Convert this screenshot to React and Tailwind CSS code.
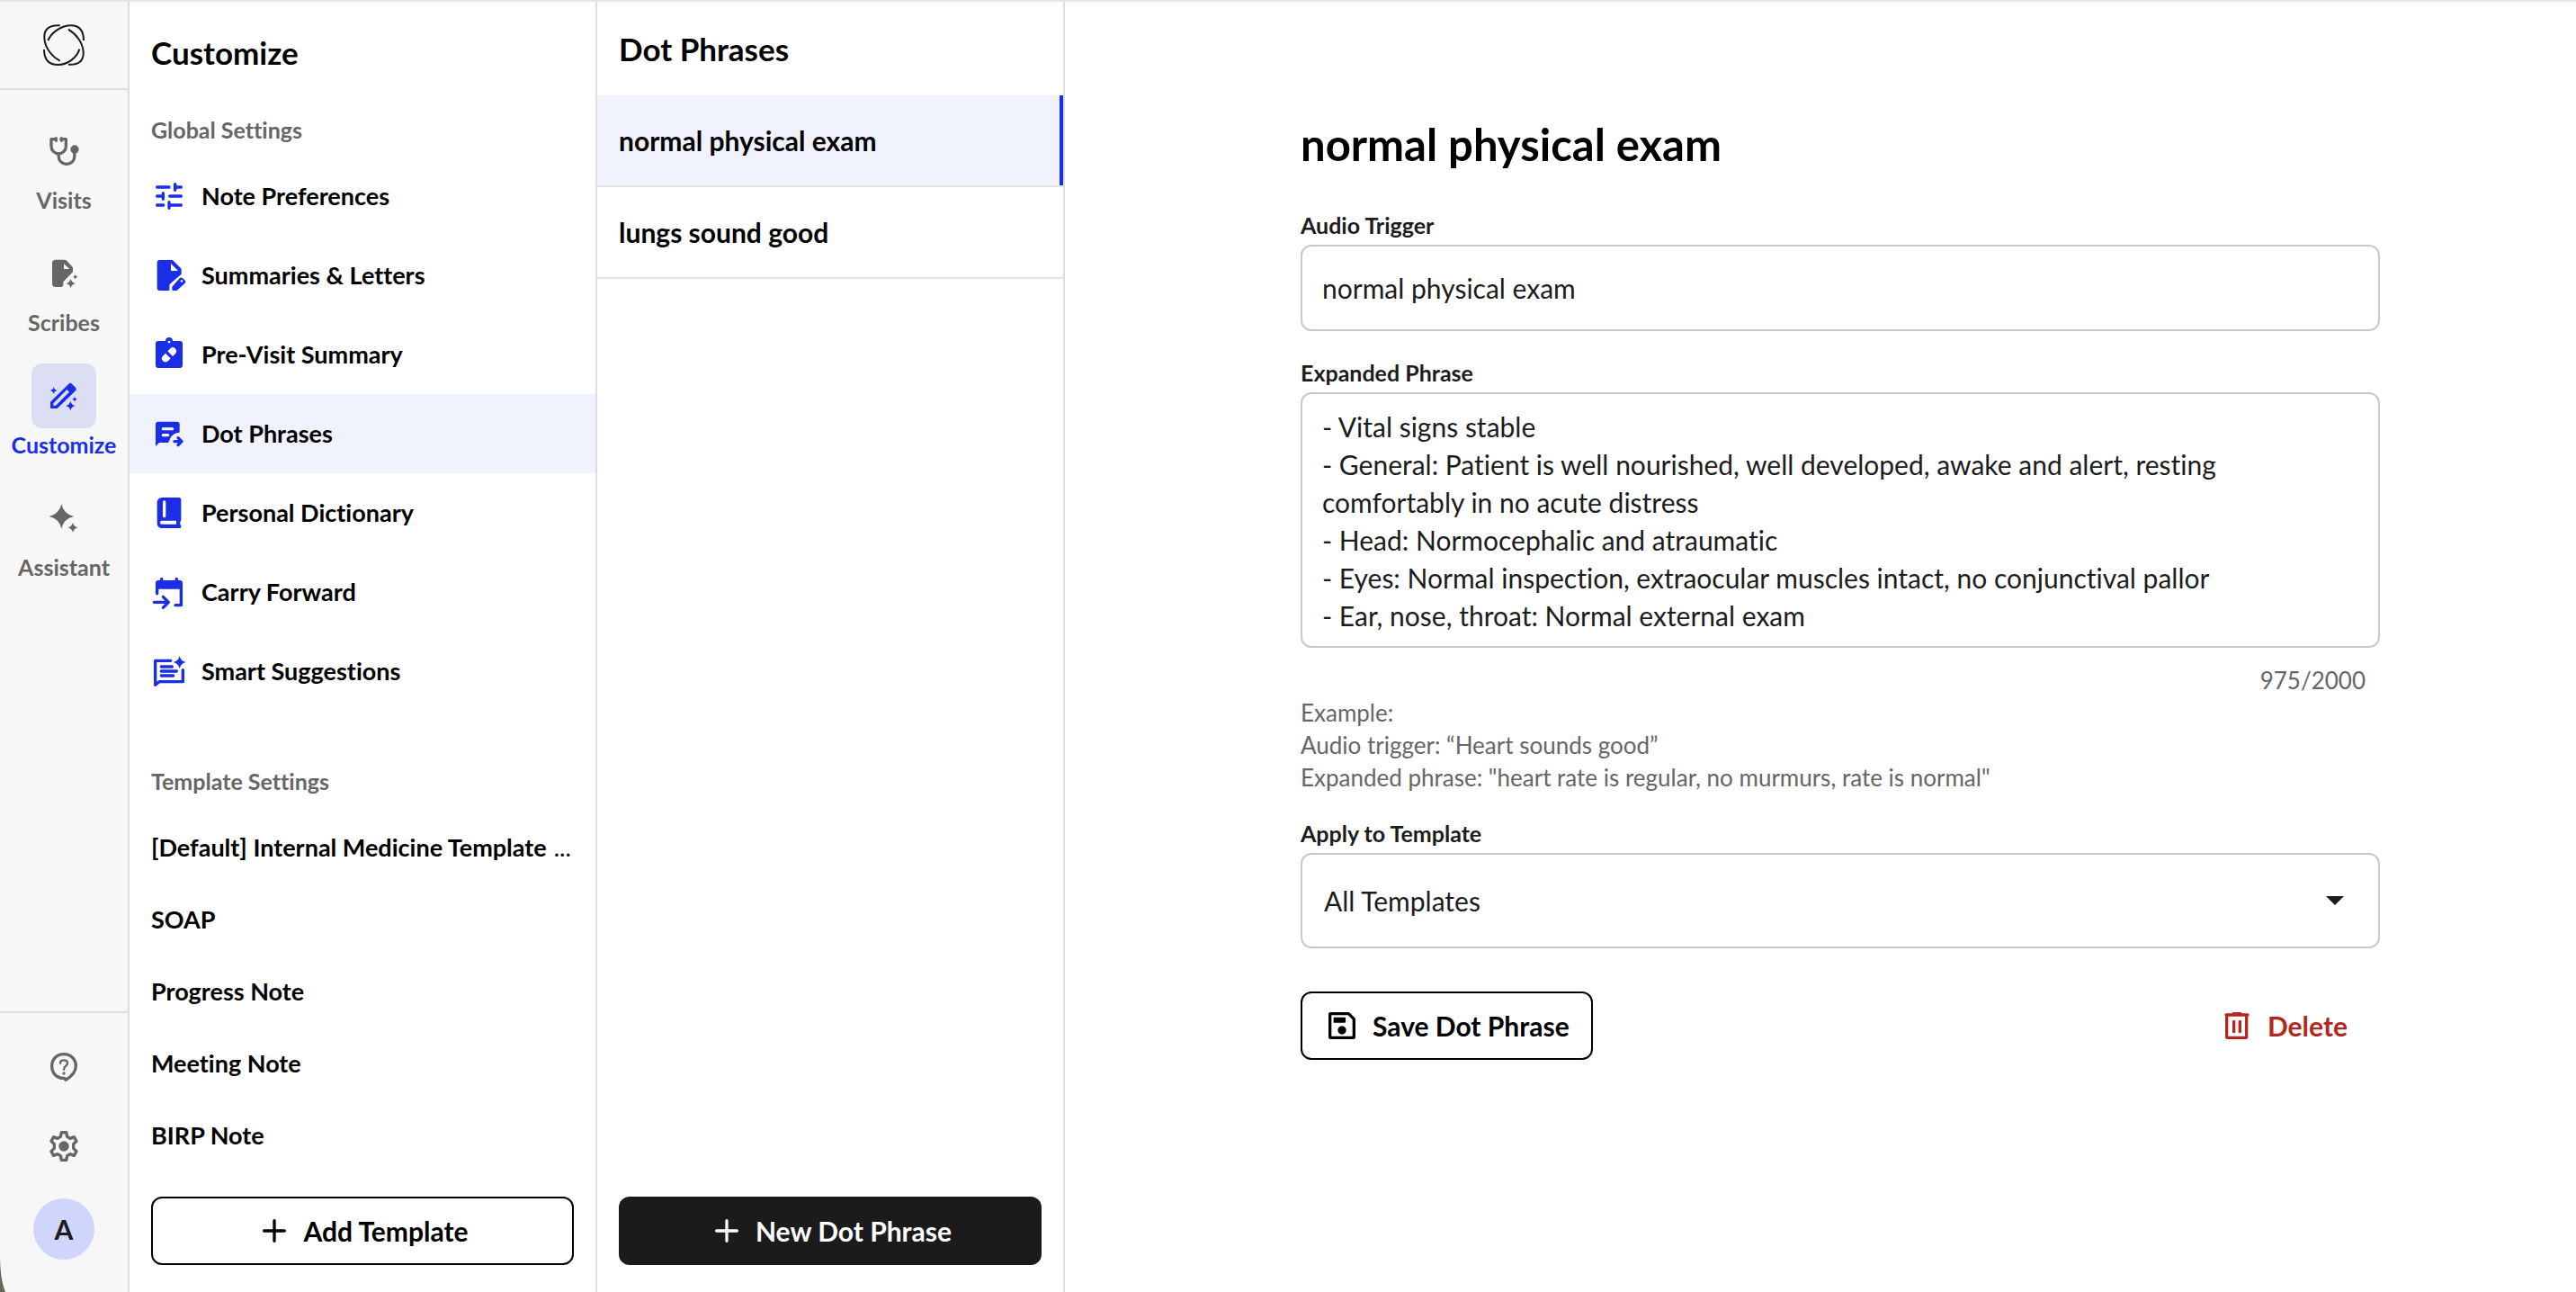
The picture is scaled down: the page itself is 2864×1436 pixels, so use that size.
import { useState } from 'react'

function starPath(cx, cy, r) {
  const k = r * 0.18
  return `M${cx} ${cy - r} Q${cx + k} ${cy - k} ${cx + r} ${cy} Q${cx + k} ${cy + k} ${cx} ${cy + r} Q${cx - k} ${cy + k} ${cx - r} ${cy} Q${cx - k} ${cy - k} ${cx} ${cy - r}z`
}

// all icons share a 120 unit grid
function Icon({ children }) {
  return (
    <svg
      viewBox="0 0 120 120"
      className="size-10 shrink-0"
      fill="none"
      stroke="currentColor"
      strokeWidth="10"
      strokeLinecap="round"
      strokeLinejoin="round"
      aria-hidden="true"
    >
      {children}
    </svg>
  )
}

function Solid({ d }) {
  return <path d={d} fill="currentColor" stroke="none" fillRule="evenodd" />
}

function Logo() {
  return (
    <svg viewBox="0 0 138 138" className="size-[46px]" fill="none" stroke="#1c1c1c" strokeWidth="6" aria-hidden="true">
      <path d="M56 4 C22 2 2 14 4 46 C6 80 30 108 56 122" />
      <path d="M84 17 C112 34 132 62 134 92 C136 122 118 136 84 134" />
      <path d="M16 54 C28 26 62 4 92 4 C122 4 135 22 135 54" />
      <path d="M3 84 C3 116 18 135 50 135 C82 134 112 112 121 83" />
    </svg>
  )
}

function StethoscopeIcon() {
  return (
    <Icon>
      <path d="M34 20 H18 V44 a24.5 24.5 0 0 0 49 0 V20 H51" />
      <path d="M34 17 V25 M52 17 V25 M42.5 69 V77 a26.5 26.5 0 0 0 53 0 V56" />
      <circle cx="96" cy="54" r="14" fill="currentColor" stroke="none" />
    </Icon>
  )
}

function ScribesIcon() {
  return (
    <Icon>
      <Solid d="M32 14 H62 a8 8 0 0 1 6 2 L87 36 a8 8 0 0 1 3 6 V55 L62 83 a8 8 0 0 0 -4 7 V97 a8 8 0 0 1 -8 8 H32 a11 11 0 0 1 -11 -11 V25 a11 11 0 0 1 11 -11z M60 27 V45 H79z" />
      <Solid d={starPath(83, 93, 16)} />
      <Solid d={starPath(98, 71, 8)} />
    </Icon>
  )
}

function WandIcon() {
  return (
    <Icon>
      <Solid d="M15 80 L76 20 a8 8 0 0 1 11 0 L99 32 a8 8 0 0 1 0 11 L38 102 H18 a3 3 0 0 1 -3 -3z M25 85 V92 H33 L78 47 L70 39z" />
      <Solid d={starPath(26, 42, 12)} />
      <Solid d={starPath(82, 93, 16)} />
      <Solid d={starPath(96, 71, 8)} />
    </Icon>
  )
}

function AssistantIcon() {
  return (
    <Icon>
      <Solid d={starPath(52, 54, 41)} />
      <Solid d={starPath(90, 91, 17)} />
    </Icon>
  )
}

function HelpIcon() {
  return (
    <Icon>
      <path d="M62 97 C36 99 20 80 20 56 C20 32 38 17 60 17 C82 17 100 32 100 56 C100 76 84 92 66 103z" />
      <path d="M48 47 C48 34 72 34 72 47 C72 56 60 56 60 68" strokeWidth="7" />
      <circle cx="60" cy="81" r="5" fill="currentColor" stroke="none" />
    </Icon>
  )
}

function GearIcon() {
  return (
    <Icon>
      <path d="M52 14 H68 L71 28 L81 34 L94 29 L102 43 L92 53 V67 L102 77 L94 91 L81 86 L71 92 L68 106 H52 L49 92 L39 86 L26 91 L18 77 L28 67 V53 L18 43 L26 29 L39 34 L49 28z" />
      <circle cx="60" cy="60" r="17" fill="currentColor" stroke="none" />
    </Icon>
  )
}

function SlidersIcon() {
  return (
    <Icon>
      <path d="M20 30 H60 M80 20 V40 M80 30 H100 M20 60 H40 M40 50 V70 M62 60 H100 M20 90 H41 M60 80 V100 M60 90 H100" />
    </Icon>
  )
}

function LettersIcon() {
  return (
    <Icon>
      <Solid d="M29 9 H68 a8 8 0 0 1 6 2 L98 35 a8 8 0 0 1 3 6 V56 L64 88 a10 10 0 0 0 -3 7 V111 H29 a9 9 0 0 1 -9 -9 V18 a9 9 0 0 1 9 -9z M66 21 V45 H90z" />
      <Solid d="M70 98 L95 70 a8 8 0 0 1 11 0 L113 77 a6 6 0 0 1 0 9 L88 109 a8 8 0 0 1 -5 2 H74 a4 4 0 0 1 -4 -4z M102 75 a4 4 0 1 0 .1 0z" />
    </Icon>
  )
}

function ClipboardIcon() {
  return (
    <Icon>
      <Solid d="M24 15 H48 a12 12 0 0 1 24 0 H96 a9 9 0 0 1 9 9 V96 a9 9 0 0 1 -9 9 H24 a9 9 0 0 1 -9 -9 V24 a9 9 0 0 1 9 -9z M60 14 a4 4 0 1 0 .1 0z" />
      <g transform="rotate(-45 60 61)" fill="white" stroke="none">
        <path d="M55 49 H43 a12 12 0 0 0 0 24 H55z" />
        <path d="M65 49 H77 a12 12 0 0 1 0 24 H65z" />
      </g>
    </Icon>
  )
}

function DotPhraseIcon() {
  return (
    <Icon>
      <Solid d="M24 20 H86 a9 9 0 0 1 9 9 V56 C78 57 66 66 62 80 L57 90 H27 L15 102 V29 a9 9 0 0 1 9 -9z" />
      <path d="M40 44 H71 M40 65 H56" stroke="#f0f3fd" />
      <path d="M78 86 H100 M90 74 L102 86 L90 98" />
    </Icon>
  )
}

function DictionaryIcon() {
  return (
    <Icon>
      <Solid d="M36 9 H92 a8 8 0 0 1 8 8 V84 a6 6 0 0 1 -3 5 V99 a8 8 0 0 1 3 6 V107 a4 4 0 0 1 -4 4 H36 a16 16 0 0 1 -16 -16 V25 a16 16 0 0 1 16 -16z M36 86 a6 6 0 0 0 0 12 H84 V86z" />
      <path d="M44 24 V71" stroke="white" />
    </Icon>
  )
}

function CarryIcon() {
  return (
    <Icon>
      <Solid d="M24 21 H96 a9 9 0 0 1 9 9 V50 H15 V30 a9 9 0 0 1 9 -9z" />
      <path d="M35 16 V26 M85 16 V26 M20 48 V65 M100 48 V104 H81 M10 94 H58 M40 76 L58 94 L40 112" />
    </Icon>
  )
}

function SuggestionsIcon() {
  return (
    <Icon>
      <path d="M65 25 H14 V106 L27 95 H106 V56" />
      <path d="M34 45 H70 M34 60 H85 M34 75 H74" />
      <Solid d={starPath(95, 30, 21)} />
    </Icon>
  )
}

function PlusIcon() {
  return (
    <Icon>
      <path d="M60 26 V94 M26 60 H94" />
    </Icon>
  )
}

function SaveIcon() {
  return (
    <Icon>
      <path d="M22 20 H82 L100 38 V98 a2 2 0 0 1 -2 2 H22 a2 2 0 0 1 -2 -2 V22 a2 2 0 0 1 2 -2z" />
      <Solid d="M32 32 H69 a3 3 0 0 1 3 3 V47 a3 3 0 0 1 -3 3 H32z M60 61 a14 14 0 1 0 .1 0z" />
    </Icon>
  )
}

function TrashIcon() {
  return (
    <Icon>
      <path d="M26 24 V98 a2 2 0 0 0 2 2 H90 a2 2 0 0 0 2 -2 V24 M24 24 H96 M48 20 H72 M50 46 V80 M70 46 V80" />
    </Icon>
  )
}

const railItems = [
  { label: 'Visits', icon: StethoscopeIcon },
  { label: 'Scribes', icon: ScribesIcon },
  { label: 'Customize', icon: WandIcon, active: true },
  { label: 'Assistant', icon: AssistantIcon },
]

const globalSettings = [
  { label: 'Note Preferences', icon: SlidersIcon },
  { label: 'Summaries & Letters', icon: LettersIcon },
  { label: 'Pre-Visit Summary', icon: ClipboardIcon },
  { label: 'Dot Phrases', icon: DotPhraseIcon, active: true },
  { label: 'Personal Dictionary', icon: DictionaryIcon },
  { label: 'Carry Forward', icon: CarryIcon },
  { label: 'Smart Suggestions', icon: SuggestionsIcon },
]

const templates = ['[Default] Internal Medicine Template', 'SOAP', 'Progress Note', 'Meeting Note', 'BIRP Note']

const phrases = ['normal physical exam', 'lungs sound good']

const expandedPhrase = `- Vital signs stable
- General: Patient is well nourished, well developed, awake and alert, resting comfortably in no acute distress
- Head: Normocephalic and atraumatic
- Eyes: Normal inspection, extraocular muscles intact, no conjunctival pallor
- Ear, nose, throat: Normal external exam`

function Rail() {
  return (
    <nav className="relative flex w-36 shrink-0 flex-col border-r-2 border-[#dedede] bg-[#f7f7f7] text-[#666]">
      <a href="#home" aria-label="Home" className="flex h-[98px] items-center justify-center border-b-2 border-[#dedede]">
        <Logo />
      </a>
      <div className="flex flex-1 flex-col items-center gap-7 pt-8">
        {railItems.map(({ label, icon: ItemIcon, active }) => (
          <a
            key={label}
            href={`#${label.toLowerCase()}`}
            className={`flex flex-col items-center ${active ? 'text-[#1a2ee8]' : ''}`}
          >
            <span className={`flex size-[72px] items-center justify-center rounded-xl ${active ? 'bg-[#dcdef3]' : ''}`}>
              <ItemIcon />
            </span>
            <span className="text-[25px] leading-9 font-bold">{label}</span>
          </a>
        ))}
      </div>
      <div className="flex flex-col items-center gap-[38px] border-t-2 border-[#dedede] pt-10 pb-9">
        <div className="flex flex-col gap-12">
          <button type="button" aria-label="Help">
            <HelpIcon />
          </button>
          <button type="button" aria-label="Settings">
            <GearIcon />
          </button>
        </div>
        <button
          type="button"
          className="flex size-[68px] items-center justify-center rounded-full bg-[#d0d5fb] text-[30px] font-bold text-[#1c1c1c]"
        >
          A
        </button>
      </div>
      <svg viewBox="0 0 6 42" className="absolute bottom-0 left-0 h-[42px] w-1.5" aria-hidden="true">
        <path d="M0 0 C0 20 2 32 6 42 H0z" fill="#66665e" />
      </svg>
    </nav>
  )
}

function SettingsPanel() {
  return (
    <aside className="flex w-[520px] shrink-0 flex-col border-r-2 border-[#dedede]">
      <h1 className="px-6 pt-[34px] text-[35px] leading-[44px] font-bold">Customize</h1>
      <h2 className="mt-[46px] px-6 text-[25px] leading-9 font-bold text-[#666]">Global Settings</h2>
      <ul className="mt-3">
        {globalSettings.map(({ label, icon: ItemIcon, active }) => (
          <li key={label}>
            <a href="#setting" className={`flex h-[88px] items-center gap-4 px-6 ${active ? 'bg-[#f0f3fd]' : ''}`}>
              <span className="text-[#1a2ee8]">
                <ItemIcon />
              </span>
              <span className="text-[27px] leading-9 font-bold">{label}</span>
            </a>
          </li>
        ))}
      </ul>
      <h2 className="mt-[60px] px-6 text-[25px] leading-9 font-bold text-[#666]">Template Settings</h2>
      <ul className="mt-4 flex-1">
        {templates.map((name, i) => (
          <li key={name}>
            <a href="#template" className="flex h-20 items-center gap-2 px-6 text-[27px] leading-9 whitespace-nowrap">
              <span className="font-bold">{name}</span>
              {i === 0 && <span>...</span>}
            </a>
          </li>
        ))}
      </ul>
      <div className="px-6 pb-[30px]">
        <button
          type="button"
          className="flex h-[76px] w-full items-center justify-center gap-3 rounded-xl border-2 border-black text-[30px] font-bold"
        >
          <PlusIcon />
          Add Template
        </button>
      </div>
    </aside>
  )
}

function PhrasePanel() {
  return (
    <section className="flex w-[520px] shrink-0 flex-col border-r-2 border-[#dedede]">
      <h2 className="flex h-[104px] items-center px-6 text-[35px] leading-[44px] font-bold">Dot Phrases</h2>
      <ul className="flex-1">
        {phrases.map((phrase, i) => (
          <li key={phrase} className="border-b-2 border-[#e4e4e4]">
            <a
              href="#phrase"
              className={`flex h-[100px] items-center px-6 text-[30px] font-bold ${
                i === 0 ? 'border-r-4 border-[#1a2ee8] bg-[#f0f3fd]' : ''
              }`}
            >
              {phrase}
            </a>
          </li>
        ))}
      </ul>
      <div className="px-6 pb-[30px]">
        <button
          type="button"
          className="flex h-[76px] w-full items-center justify-center gap-3 rounded-xl bg-[#1b1b1b] text-[30px] font-bold text-white"
        >
          <PlusIcon />
          New Dot Phrase
        </button>
      </div>
    </section>
  )
}

function PhraseForm() {
  const [trigger, setTrigger] = useState('normal physical exam')
  const [expanded, setExpanded] = useState(expandedPhrase)

  return (
    <main className="flex-1 pl-11">
      <form className="mx-auto max-w-[1200px] pt-32 text-[#1c1c1c]">
        <h1 className="text-[49px] leading-[60px] font-bold text-black">normal physical exam</h1>

        <label htmlFor="trigger" className="mt-[42px] block text-[25px] leading-9 font-bold">
          Audio Trigger
        </label>
        <input
          id="trigger"
          value={trigger}
          onChange={(e) => setTrigger(e.target.value)}
          className="mt-1 block h-24 w-full rounded-xl border-2 border-[#c9c9c9] px-[22px] text-[30px]"
        />

        <label htmlFor="expanded" className="mt-7 block text-[25px] leading-9 font-bold">
          Expanded Phrase
        </label>
        <textarea
          id="expanded"
          rows={6}
          value={expanded}
          onChange={(e) => setExpanded(e.target.value)}
          className="mt-1 block w-full resize-none overflow-hidden rounded-xl border-2 border-[#c9c9c9] px-[22px] pt-[15px] pb-[13px] text-[30px] leading-[42px]"
        />
        <p className="mt-[18px] pr-4 text-right text-[26px] leading-9 text-[#666]">975/2000</p>
        <div className="text-[26px] leading-9 text-[#666]">
          <p>Example:</p>
          <p>Audio trigger: “Heart sounds good”</p>
          <p>Expanded phrase: "heart rate is regular, no murmurs, rate is normal"</p>
        </div>

        <label htmlFor="template" className="mt-[26px] block text-[25px] leading-9 font-bold">
          Apply to Template
        </label>
        <div className="relative mt-1">
          <select
            id="template"
            className="block h-[106px] w-full appearance-none rounded-xl border-2 border-[#c9c9c9] bg-transparent px-6 text-[30px]"
          >
            <option>All Templates</option>
          </select>
          <svg viewBox="0 0 20 10" className="pointer-events-none absolute top-12 right-10 h-2.5 w-5" aria-hidden="true">
            <path d="M0 0 H20 L10 10z" fill="#1c1c1c" />
          </svg>
        </div>

        <div className="mt-12 flex items-center justify-between text-[30px] font-bold">
          <button
            type="button"
            className="flex h-[76px] items-center gap-[14px] rounded-xl border-2 border-black px-6 text-black"
          >
            <SaveIcon />
            Save Dot Phrase
          </button>
          <button type="button" className="flex h-[76px] items-center gap-[14px] px-9 text-[#b02820]">
            <TrashIcon />
            Delete
          </button>
        </div>
      </form>
    </main>
  )
}

export default function App() {
  return (
    <div className="flex h-screen border-t-2 border-[#e7e3ea] bg-white font-['Lato',sans-serif] text-black [font-variant-ligatures:none]">
      <Rail />
      <SettingsPanel />
      <PhrasePanel />
      <PhraseForm />
    </div>
  )
}
